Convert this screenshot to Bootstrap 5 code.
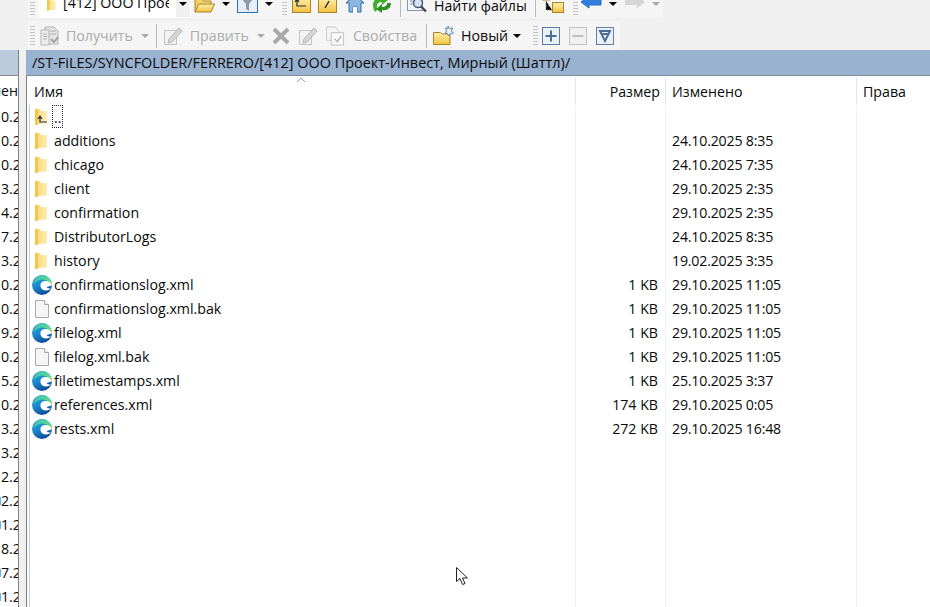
<!DOCTYPE html>
<html lang="ru">
<head>
<meta charset="utf-8">
<title>Файловый менеджер</title>
<link href="https://cdn.jsdelivr.net/npm/bootstrap@5.3.0/dist/css/bootstrap.min.css" rel="stylesheet">
<style>
html,body{margin:0;height:100%;overflow:hidden;background:#f0f0f0}
body{font-family:"Open Sans","Noto Sans","Liberation Sans",sans-serif;font-size:14.2px;line-height:20px;color:#0a0a0a}
.fm-app{width:930px;height:607px;position:relative;overflow:hidden;background:#f0f0f0}
.fm-defs{position:absolute;width:0;height:0}
.fm-bars{height:50px;padding-left:28px}
.fm-top{height:18px;padding-bottom:5px;width:635px;background:#f5f5f5}
.fm-sec{height:29px;margin-top:3px;width:592px;background:#f5f5f5}
.fm-top>*,.fm-sec>*{flex:none}
.fm-grip{width:5px;height:20px;background:repeating-linear-gradient(to bottom,#c4c4c4 0 1px,transparent 1px 3px)}
.fm-top .fm-grip{margin-bottom:-3px}
.fm-caret{width:0;height:0;border-left:4px solid transparent;border-right:4px solid transparent;border-top:4px solid #000}
.fm-caret-off{border-top-color:#a8a8a8}
.fm-sep{width:1px;height:24px;background:#b8b8b8}
.fm-top .fm-sep{margin-bottom:-4px}
.fm-off{color:#ababab}
.fm-combo{width:153px;height:18px;margin-left:3px;background:#fff;position:relative;overflow:hidden;white-space:nowrap;align-self:flex-start}
.fm-combo-text{position:absolute;left:25px;bottom:5px;width:106px;overflow:hidden}
.fm-combo-ic{position:absolute;left:9px;bottom:5px}
.fm-combo-btn{position:absolute;left:138px;top:0;width:14px;height:17px;background:#f0f0f0}
.fm-combo .fm-caret{position:absolute;left:141px;top:2px}
.t1{margin-left:2px}.t2{margin-left:3px}.t3{margin-left:7px}
.m-caret{margin-left:7px;margin-bottom:7px}
.m-grip{margin-left:9px}.m-up{margin-left:5px}.m-a{margin-left:7px}.m-b{margin-left:9px}.m-c{margin-left:8px}.m-d{margin-left:8px}
.m-search{margin-left:6px}.m-find{margin-left:6px}.m-s2{margin-left:8px}.m-tree{margin-left:6px}.m-g3{margin-left:9px}.m-left{margin-left:3px;margin-bottom:3px}.m-right{margin-left:7px;margin-bottom:3px}
.s0{margin-left:2px}.s1{margin-left:5px}.s2{margin-left:6px}.s3{margin-left:8px}.s4{margin-left:7px}.s5{margin-left:6px}.s6{margin-left:7px}.s8{margin-left:7px}.s9{margin-left:8px}.s10{margin-left:8px}.s11{margin-left:9px}.s12{margin-left:6px}.s13{margin-left:7px}.s14{margin-left:5px}.s15{margin-left:12px}.s16{margin-left:4px}.s17{margin-left:9px}.s18{margin-left:9px}
.fm-main{height:557px}
.fm-left{width:19px;border-right:1px solid #7f7f7f;background:#fff;overflow:hidden;flex:none}
.fm-left-head{height:26px;background:#b9cbdd;border-bottom:1px solid #8a8a8a}
.fm-left-col{height:29px;line-height:30px;white-space:nowrap;overflow:hidden;width:18px}
.fm-left-row{height:24px;line-height:24px;width:18px;padding-left:1px;overflow:hidden;white-space:nowrap}
.fm-edge-bit{background:linear-gradient(#5eb4ef,#5eb4ef) no-repeat 0 50%/1px 8px}
.fm-split{width:7px;flex:none;background:#f0f0f0}
.fm-right{border-left:1px solid #7f7f7f;background:#fff;min-width:0;flex:1;position:relative}
.fm-path{height:26px;line-height:26px;margin-left:-1px;background:#98b2d0;border-bottom:1px solid #808d9c;padding-left:6px;white-space:nowrap;font-size:14.45px}
.fm-head{height:29px;position:relative}
.c-name{width:549px;flex:none}
.c-size{width:90px;flex:none;text-align:right;padding-right:5px}
.c-date{width:191px;flex:none;padding-left:6px}
.c-perm{flex:1;padding-left:6px}
.fm-head>div{height:27px;margin-top:1px;line-height:29px;border-right:1px solid #e5e5e5}
.fm-head .c-name{padding-left:7px}
.fm-head .c-perm{border-right:0}
.fm-sort{position:absolute;left:269px;top:1px}
.fm-body{margin-left:2px;border-left:1px solid #b5cff2;height:502px;display:flex;flex-direction:column}
.fm-row{height:24px;line-height:24px;white-space:nowrap;flex:none}
.fm-row>div{height:24px;border-right:1px solid #edf3fb}
.fm-row .c-name{width:546px;display:flex;align-items:center}
.fm-row .c-size{padding-right:7px}
.fm-row .c-date{letter-spacing:-.2px}
.fm-row .c-perm{border-right:0}
.fm-fill{flex:1}
.fm-fill>div{height:auto;border-right:1px solid #edf3fb}
.fm-fill .c-name{width:546px}
.fm-fill .c-perm{border-right:0}
.fm-ico{width:24px;flex:none;display:flex;justify-content:center;align-items:center}
.fm-dots{outline:1px dotted #222;height:21px;width:9px;line-height:24px;margin-left:-1px;margin-top:-2px;padding-left:1px}
.fm-cursor{position:absolute;left:456px;top:567px}
</style>
</head>
<body>
<svg class="fm-defs" aria-hidden="true">
<defs>
<linearGradient id="gf" x1="0" y1="0" x2="1" y2="0"><stop offset="0" stop-color="#f6cb58"/><stop offset=".3" stop-color="#fbdd85"/><stop offset="1" stop-color="#fdeeb6"/></linearGradient>
<linearGradient id="gy" x1="0" y1="0" x2="0" y2="1"><stop offset="0" stop-color="#fff0ad"/><stop offset="1" stop-color="#f2c23e"/></linearGradient>
<linearGradient id="ge" x1="0" y1="0" x2=".5" y2="1"><stop offset="0" stop-color="#2cb7d8"/><stop offset=".55" stop-color="#1a85cf"/><stop offset="1" stop-color="#0b4f9e"/></linearGradient>
<linearGradient id="gg" x1="0" y1="0" x2="1" y2="1"><stop offset="0" stop-color="#2fc3c6"/><stop offset="1" stop-color="#7fe06b"/></linearGradient>
<symbol id="i-folder" viewBox="0 0 14 18"><path d="M0 1h5l1 2h6v12.500l-8 .5-4 1z" fill="url(#gf)"/><path d="M0 1h3v15.500l-3 .5z" fill="#f5c64d"/></symbol>
<symbol id="i-edge" viewBox="0 0 20 20"><circle cx="10" cy="10" r="10" fill="url(#ge)"/><path d="M10 0a10 10 0 0 1 10 10l-2 0C17 7 14 4.600 10 4.600 6.800 4.600 3 7 2 10 2.500 4.500 6 0 10 0z" fill="url(#gg)"/><path d="M20 9.500C18 6.500 15 5.500 12.500 6 9.500 6.500 8 9 8.500 11.500 9 14 11.500 15.800 14.500 15.500 16.500 15.300 18 14.500 19 13.500 17.500 13.600 15.500 13.300 15 12.500 14.800 11.800 16 11.500 17 11.300 18.500 11 19.500 10.500 20 9.500z" fill="#fff"/></symbol>
<symbol id="i-page" viewBox="0 0 14 18"><path d="M.5.500h9l4 4v13H.5z" fill="#f5f5f5" stroke="#a9a9a9"/><path d="M9.500.500v4h4" fill="#fff" stroke="#a9a9a9"/></symbol>
<symbol id="i-doc" viewBox="0 0 20 20"><path d="M5 1h9l4 4v13H5z" fill="#e4e4e4" stroke="#b4b4b4"/><path d="M1 4h8v15H1z" fill="#ececec" stroke="#b4b4b4"/><path d="M3 8h4M3 10.500h4M3 13h4M10 5h6M10 8h6" stroke="#b0b0b0"/><path d="M11 13l3 3 4-5" fill="none" stroke="#a4a4a4" stroke-width="2"/></symbol>
<symbol id="i-pencil" viewBox="0 0 20 20"><path d="M1.500 4.500h12v14h-12z" fill="#f2f2f2" stroke="#c4c4c4"/><path d="M6 13l10-11 3 3-10 11-4 1z" fill="#d6d6d6" stroke="#b4b4b4"/></symbol>
<symbol id="i-props" viewBox="0 0 20 20"><path d="M.5.500h9l4 4v10H.5z" fill="#f4f4f4" stroke="#c8c8c8"/><path d="M5.500 6.500h13v13h-13z" fill="#fafafa" stroke="#c0c0c0"/><path d="M9 13l3 3 4-6" fill="none" stroke="#b4b4b4" stroke-width="1.500"/></symbol>
</defs>
</svg>
<div class="fm-app">
  <div class="fm-bars">
    <div class="fm-top d-flex align-items-end">
      <span class="fm-grip t1"></span>
      <div class="fm-combo">
        <svg class="fm-combo-ic" width="10" height="16"><use href="#i-folder"/></svg>
        <div class="fm-combo-text">[412] ООО Проект-Инвест</div>
        <span class="fm-combo-btn"></span>
        <span class="fm-caret"></span>
      </div>
      <svg class="t2" width="21" height="16" viewBox="0 0 21 16"><path d="M1 15V2h7l1.500 2H17v3" fill="#f7d264" stroke="#a8842a"/><path d="M1 15l3.500-8H20.500L17 15z" fill="url(#gy)" stroke="#a8842a"/></svg>
      <span class="fm-caret m-caret"></span>
      <svg class="t3" width="21" height="15" viewBox="0 0 21 15"><rect x=".5" y="-3.500" width="20" height="18" fill="#e4eefb" stroke="#2f6fb5"/><path d="M4 0h13l-5 6v7l-3-2V6z" fill="#8f9aa6"/></svg>
      <span class="fm-caret m-caret"></span>
      <span class="fm-grip m-grip"></span>
      <svg class="m-up" width="19" height="17" viewBox="0 0 19 17"><rect x=".5" y="1.500" width="18" height="15" fill="url(#gy)" stroke="#a8842a"/><path d="M5 4v6h9M3 6l2-3 2 3" fill="none" stroke="#1f2b3a" stroke-width="1.200"/></svg>
      <svg class="m-a" width="19" height="17" viewBox="0 0 19 17"><rect x=".5" y="1.500" width="18" height="15" fill="url(#gy)" stroke="#a8842a"/><path d="M7 12L11 5" stroke="#1f2b3a" stroke-width="1.400"/></svg>
      <svg class="m-b" width="18" height="18" viewBox="0 0 18 18"><path d="M9 0L0 8h3v9h4v-5h4v5h4V8h3z" fill="#8db6e3" stroke="#2f6aa8"/><rect x="7" y="12" width="4" height="5" fill="#fff"/></svg>
      <svg class="m-c" width="20" height="18" viewBox="0 0 20 18"><path d="M1 10c0-5 4-8 9-7V0l6 5-6 5V7C7 7 5 8 5 11v4l-2 2c-1-2-2-4-2-7z" fill="#3fae2a"/><path d="M19 8c0 5-4 8-9 7v3l-6-4 6-5v3c3 0 5-1 5-4z" fill="#2c8f1e"/></svg>
      <span class="fm-sep m-d"></span>
      <svg class="m-search" width="21" height="19" viewBox="0 0 21 19"><rect x=".5" y=".5" width="15" height="16" fill="#f4f8fc" stroke="#7d99ba"/><path d="M3 4h5M3 7h3M3 10h3" stroke="#6f8fb4"/><circle cx="11" cy="9" r="4.500" fill="#cfe4f6" stroke="#4f5f73" stroke-width="1.500"/><path d="M14 12.500l5 5" stroke="#444" stroke-width="2.400"/></svg>
      <span class="m-find lh-1">Найти файлы</span>
      <span class="fm-sep m-s2"></span>
      <svg class="m-tree" width="22" height="16" viewBox="0 0 22 16"><rect x=".5" y="-2" width="7" height="5" fill="#f3d675" stroke="#a8842a"/><path d="M4 4v9h6M4 9h3" stroke="#777" stroke-dasharray="1 1"/><rect x="10.500" y="5.500" width="11" height="10" fill="url(#gy)" stroke="#a8842a"/></svg>
      <span class="fm-grip m-g3"></span>
      <svg class="m-left" width="21" height="14" viewBox="0 0 21 14"><path d="M8 0L0 6l8 6V9h12V3H8z" fill="#2f7ee0" stroke="#2a6cc4"/></svg>
      <span class="fm-caret m-caret"></span>
      <svg class="m-right" width="21" height="14" viewBox="0 0 21 14"><path d="M13 0l8 6-8 6V9H1V3h12z" fill="#d6d6d6"/></svg>
      <span class="fm-caret fm-caret-off m-caret"></span>
    </div>
    <div class="fm-sec d-flex align-items-center">
      <span class="fm-grip s0"></span>
      <svg class="s1" width="20" height="20"><use href="#i-doc"/></svg>
      <span class="s2 fm-off">Получить</span>
      <span class="fm-caret fm-caret-off s3"></span>
      <span class="fm-sep s4"></span>
      <svg class="s5" width="20" height="20"><use href="#i-pencil"/></svg>
      <span class="s6 fm-off">Править</span>
      <span class="fm-caret fm-caret-off s3"></span>
      <svg class="s8" width="18" height="18" viewBox="0 0 18 18"><path d="M2 2l14 14M16 2L2 16" stroke="#a9a9a9" stroke-width="4"/></svg>
      <svg class="s9" width="20" height="20"><use href="#i-pencil"/></svg>
      <svg class="s10" width="19" height="20"><use href="#i-props"/></svg>
      <span class="s9 fm-off">Свойства</span>
      <span class="fm-sep s11"></span>
      <svg class="s12" width="21" height="20" viewBox="0 0 21 20"><path d="M.5 18.500V6.500h7l1.500 1.500h8v10.500z" fill="url(#gy)" stroke="#a8842a"/><path d="M15 0l1.500 2.500L19.500 2l-1 3 2 2-3 .5L16 10l-1.500-2.500L12 7l1.500-2-1-3 2.500.5z" fill="#e8f0fa" stroke="#5c84b3"/></svg>
      <span class="s13">Новый</span>
      <span class="fm-caret s14"></span>
      <span class="fm-grip s15"></span>
      <svg class="s16" width="18" height="18" viewBox="0 0 18 18"><rect x=".5" y=".5" width="17" height="17" fill="#e9f1fb" stroke="#5f7fa6"/><path d="M9 3.500v11M3.500 9h11" stroke="#4d6d96" stroke-width="2"/></svg>
      <svg class="s17" width="18" height="18" viewBox="0 0 18 18"><rect x=".5" y=".5" width="17" height="17" fill="#f0f0f0" stroke="#c4c4c4"/><path d="M3.500 9h11" stroke="#c0c0c0" stroke-width="2"/></svg>
      <svg class="s18" width="18" height="18" viewBox="0 0 18 18"><rect x=".5" y=".5" width="17" height="17" fill="#e9f1fb" stroke="#5f7fa6"/><path d="M4 4h10L9 14z" fill="none" stroke="#4d6d96" stroke-width="2"/><path d="M5.500 7h7" stroke="#4d6d96" stroke-width="2"/></svg>
    </div>
  </div>
  <div class="fm-main d-flex">
    <div class="fm-left">
      <div class="fm-left-head"></div>
      <div class="fm-left-col d-flex justify-content-end"><span class="flex-shrink-0">мен</span></div>
      <div class="fm-left-row">0.2025</div>
      <div class="fm-left-row">0.2025</div>
      <div class="fm-left-row">0.2025</div>
      <div class="fm-left-row">3.2025</div>
      <div class="fm-left-row">4.2025</div>
      <div class="fm-left-row">7.2025</div>
      <div class="fm-left-row">3.2025</div>
      <div class="fm-left-row">0.2025</div>
      <div class="fm-left-row">0.2025</div>
      <div class="fm-left-row">9.2025</div>
      <div class="fm-left-row">0.2025</div>
      <div class="fm-left-row">5.2025</div>
      <div class="fm-left-row">0.2025</div>
      <div class="fm-left-row">3.2025</div>
      <div class="fm-left-row">3.2025</div>
      <div class="fm-left-row">2.2025</div>
      <div class="fm-left-row fm-edge-bit">2.2025</div>
      <div class="fm-left-row fm-edge-bit">1.2025</div>
      <div class="fm-left-row">8.2025</div>
      <div class="fm-left-row fm-edge-bit">7.2025</div>
      <div class="fm-left-row fm-edge-bit">1.2025</div>
    </div>
    <div class="fm-split"></div>
    <div class="fm-right">
      <div class="fm-path">/ST-FiLES/SYNCFOLDER/FERRERO/[412] ООО Проект-Инвест, Мирный (Шаттл)/</div>
      <div class="fm-head d-flex">
        <div class="c-name">Имя</div>
        <div class="c-size">Размер</div>
        <div class="c-date">Изменено</div>
        <div class="c-perm">Права</div>
        <svg class="fm-sort" width="10" height="6" viewBox="0 0 10 6"><path d="M1 5l4-4 4 4" fill="none" stroke="#9a9a9a"/></svg>
      </div>
      <div class="fm-body">
        <div class="fm-row d-flex"><div class="c-name"><span class="fm-ico"><svg width="14" height="18" viewBox="0 0 14 18"><use href="#i-folder" width="14" height="18"/><path d="M5 9v5h7M3 11l2-3 2 3" fill="none" stroke="#26324a" stroke-width="1.200"/></svg></span><span class="fm-dots">..</span></div><div class="c-size"></div><div class="c-date"></div><div class="c-perm"></div></div>
        <div class="fm-row d-flex"><div class="c-name"><span class="fm-ico"><svg width="14" height="18"><use href="#i-folder"/></svg></span>additions</div><div class="c-size"></div><div class="c-date">24.10.2025 8:35</div><div class="c-perm"></div></div>
        <div class="fm-row d-flex"><div class="c-name"><span class="fm-ico"><svg width="14" height="18"><use href="#i-folder"/></svg></span>chicago</div><div class="c-size"></div><div class="c-date">24.10.2025 7:35</div><div class="c-perm"></div></div>
        <div class="fm-row d-flex"><div class="c-name"><span class="fm-ico"><svg width="14" height="18"><use href="#i-folder"/></svg></span>client</div><div class="c-size"></div><div class="c-date">29.10.2025 2:35</div><div class="c-perm"></div></div>
        <div class="fm-row d-flex"><div class="c-name"><span class="fm-ico"><svg width="14" height="18"><use href="#i-folder"/></svg></span>confirmation</div><div class="c-size"></div><div class="c-date">29.10.2025 2:35</div><div class="c-perm"></div></div>
        <div class="fm-row d-flex"><div class="c-name"><span class="fm-ico"><svg width="14" height="18"><use href="#i-folder"/></svg></span>DistributorLogs</div><div class="c-size"></div><div class="c-date">24.10.2025 8:35</div><div class="c-perm"></div></div>
        <div class="fm-row d-flex"><div class="c-name"><span class="fm-ico"><svg width="14" height="18"><use href="#i-folder"/></svg></span>history</div><div class="c-size"></div><div class="c-date">19.02.2025 3:35</div><div class="c-perm"></div></div>
        <div class="fm-row d-flex"><div class="c-name"><span class="fm-ico"><svg width="20" height="20"><use href="#i-edge"/></svg></span>confirmationslog.xml</div><div class="c-size">1 KB</div><div class="c-date">29.10.2025 11:05</div><div class="c-perm"></div></div>
        <div class="fm-row d-flex"><div class="c-name"><span class="fm-ico"><svg width="14" height="18"><use href="#i-page"/></svg></span>confirmationslog.xml.bak</div><div class="c-size">1 KB</div><div class="c-date">29.10.2025 11:05</div><div class="c-perm"></div></div>
        <div class="fm-row d-flex"><div class="c-name"><span class="fm-ico"><svg width="20" height="20"><use href="#i-edge"/></svg></span>filelog.xml</div><div class="c-size">1 KB</div><div class="c-date">29.10.2025 11:05</div><div class="c-perm"></div></div>
        <div class="fm-row d-flex"><div class="c-name"><span class="fm-ico"><svg width="14" height="18"><use href="#i-page"/></svg></span>filelog.xml.bak</div><div class="c-size">1 KB</div><div class="c-date">29.10.2025 11:05</div><div class="c-perm"></div></div>
        <div class="fm-row d-flex"><div class="c-name"><span class="fm-ico"><svg width="20" height="20"><use href="#i-edge"/></svg></span>filetimestamps.xml</div><div class="c-size">1 KB</div><div class="c-date">25.10.2025 3:37</div><div class="c-perm"></div></div>
        <div class="fm-row d-flex"><div class="c-name"><span class="fm-ico"><svg width="20" height="20"><use href="#i-edge"/></svg></span>references.xml</div><div class="c-size">174 KB</div><div class="c-date">29.10.2025 0:05</div><div class="c-perm"></div></div>
        <div class="fm-row d-flex"><div class="c-name"><span class="fm-ico"><svg width="20" height="20"><use href="#i-edge"/></svg></span>rests.xml</div><div class="c-size">272 KB</div><div class="c-date">29.10.2025 16:48</div><div class="c-perm"></div></div>
        <div class="fm-fill d-flex"><div class="c-name"></div><div class="c-size"></div><div class="c-date"></div><div class="c-perm"></div></div>
      </div>
    </div>
  </div>
  <svg class="fm-cursor" width="13" height="19" viewBox="0 0 13 19"><path d="M.5.500v14l3.500-3 2.500 6 2.500-1-2.500-5.500h5z" fill="#fff" stroke="#222"/></svg>
</div>
<script src="https://cdn.jsdelivr.net/npm/bootstrap@5.3.0/dist/js/bootstrap.bundle.min.js"></script>
</body>
</html>
